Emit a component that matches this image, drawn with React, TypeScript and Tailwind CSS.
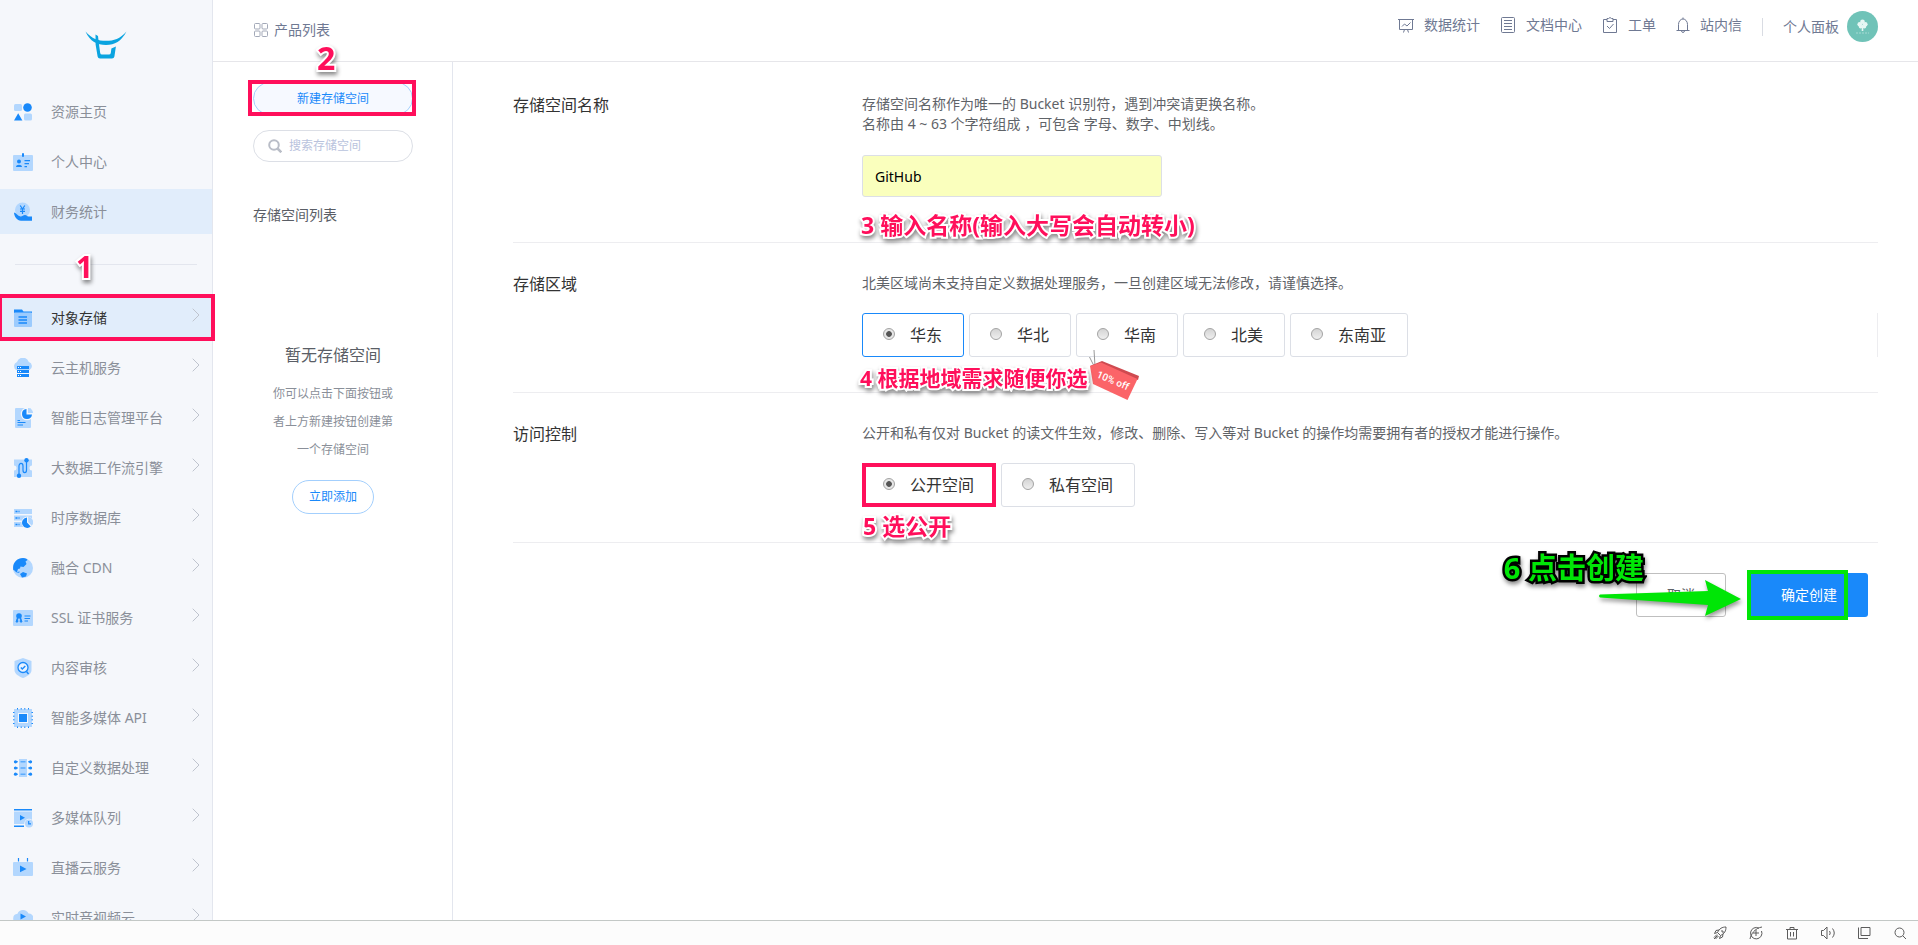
import type { ReactNode } from "react";

const LIGHT = "#b3d7fe";
const BLUE = "#1989fa";

const navIcons: Record<string, ReactNode> = {
  home: (
    <>
      <rect x="1" y="2" width="8" height="7" rx="1.5" fill={LIGHT} />
      <circle cx="14.5" cy="5.5" r="4.3" fill={BLUE} />
      <path d="M5.2 11.2 9.4 18.6H1z" fill={BLUE} />
      <rect x="11" y="11.5" width="8" height="7" rx="1.5" fill={LIGHT} />
    </>
  ),
  user: (
    <>
      <rect x="0" y="3" width="20" height="16" rx="1" fill={LIGHT} />
      <rect x="9" y="1" width="2" height="4" rx="1" fill={BLUE} />
      <circle cx="6" cy="9.5" r="2" fill={BLUE} />
      <path d="M3 15c0-3 6-3 6 0zM11.5 8h5.500v1.300h-5.500zM11.500 11h4.500v1.300h-4.500zM11.500 14h2.500v1.300h-2.500z" fill={BLUE} />
    </>
  ),
  finance: (
    <>
      <circle cx="9.500" cy="8" r="7.500" fill={LIGHT} />
      <path d="M7.200 3.500 9.500 7l2.300-3.500M7 7h5M7 9.300h5M9.500 7v5" stroke={BLUE} strokeWidth="1.200" fill="none" />
      <path d="M1 10.500c2.500.5 3.500 3.500 6.500 4 2 .2 2.500-1.500 4.500-1.500s2 2 4 1.500h3V18.700H8C4 18.700 1 14 1 10.500z" fill={BLUE} />
    </>
  ),
  storage: (
    <>
      <path d="M1 1.500h8l1.500 2H19V5H1z" fill={BLUE} />
      <rect x="1" y="4.500" width="18" height="14.500" rx="1" fill="#9ccbfd" />
      <path d="M5.500 9h8.500M5.500 12h8.500M5.500 15h8.500" stroke={BLUE} strokeWidth="1.300" />
    </>
  ),
  cloudHost: (
    <>
      <path d="M3.500 12a4.300 4.300 0 0 1 .5-8A6.200 6.200 0 0 1 15.800 4 4.300 4.300 0 0 1 16.500 12z" fill={LIGHT} />
      <path d="M4 8h12v3H4zM4 12h12v3H4zM4 16h12v3H4z" fill={BLUE} />
      <path d="M5 9.500h1M7 9.500h1M5 13.500h1M7 13.500h1M5 17.500h1M7 17.500h1" stroke="#fff" strokeWidth="1" />
    </>
  ),
  log: (
    <>
      <rect x="2" y="0" width="16" height="20" rx="1" fill={LIGHT} />
      <circle cx="14" cy="6" r="6.300" fill="#f5f7fb" />
      <path d="M13.500 1a5 5 0 1 0 5.500 5.500h-5.500z" fill={BLUE} />
      <path d="M15 0a5 5 0 0 1 5 5h-5z" fill={LIGHT} />
      <path d="M4.500 12.500H7M4.500 14.500h8M4.500 17h5.500" stroke={BLUE} strokeWidth="1" />
    </>
  ),
  workflow: (
    <>
      <path d="M1 1.500h18v6a2.500 2.500 0 0 0 0 5v6.500H1v-6.500a2.500 2.500 0 0 0 0-5z" fill={LIGHT} />
      <path d="M6 17V8c0-3.500 4-3.500 4 0v4c0 3.500 3.500 3.500 3.500 0V2.500" stroke={BLUE} strokeWidth="1.200" fill="none" />
      <circle cx="6" cy="17.800" r="2.200" fill={BLUE} />
      <circle cx="13.500" cy="2.200" r="2.200" fill={BLUE} />
    </>
  ),
  timeDb: (
    <>
      <path d="M1 1h18v5H1zM1 7.500h18v5H1zM1 14h18v5H1z" fill={LIGHT} />
      <path d="M2.500 3.500h2M5.500 3.500h1M2.500 10h2M5.500 10h1M2.500 16.500h2M5.500 16.500h1" stroke={BLUE} strokeWidth="1.500" />
      <circle cx="14.500" cy="14.500" r="6" fill="#f5f7fb" />
      <path d="M14 9.500a5.200 5.200 0 1 0 3.800 9L14 14.500z" fill={BLUE} />
      <path d="M15.200 9a5.200 5.200 0 0 1 3.500 8.800L15.200 14z" fill={LIGHT} />
    </>
  ),
  cdn: (
    <>
      <circle cx="10" cy="10" r="10" fill={LIGHT} />
      <path d="M.300 12C-1 5 4 0 10 0c3 0 4 1 4.500 2l-2 1.500 1 2.500-3 3-3-.5-.5 2-2 .5-1 3 2.500-.5c1 1.500-3 2-5-1zM7 16l3-2 4 1.500-1 3-4 1z" fill={BLUE} />
    </>
  ),
  ssl: (
    <>
      <rect x="0" y="2" width="20" height="16" rx="1" fill={LIGHT} />
      <circle cx="6" cy="8" r="2.800" fill={BLUE} />
      <path d="m4.500 9.500-1.500 4.500h1.800zM7.500 9.500 9 14H7.200z" fill={BLUE} stroke={BLUE} />
      <path d="M11.500 8h6M11.500 10.500h5.500M11.500 13h3.500" stroke={BLUE} />
    </>
  ),
  audit: (
    <>
      <path d="M10 0l8.500 3v9c0 4-4.500 6.500-8.500 8-4-1.500-8.500-4-8.500-8V3z" fill={LIGHT} />
      <circle cx="10" cy="9.500" r="5" fill="#e8f2ff" stroke={BLUE} strokeWidth="1.300" />
      <path d="m7.800 9.500 1.500 1.500 3-3M13.500 13.500l2 2.500" stroke={BLUE} strokeWidth="1.400" fill="none" />
    </>
  ),
  api: (
    <>
      <rect x="3" y="3" width="14" height="14" fill="none" stroke={LIGHT} strokeWidth="4" />
      <rect x="6" y="6" width="8" height="8" fill={BLUE} />
      <path d="M4.500 0v1.500M8.200 0v1.500M11.800 0v1.500M15.500 0v1.500M4.500 18.500V20M8.200 18.500V20M11.800 18.500V20M15.500 18.500V20M0 4.500h1.500M0 8.200h1.500M0 11.800h1.500M0 15.500h1.500M18.500 4.500H20M18.500 8.200H20M18.500 11.800H20M18.500 15.500H20" stroke={BLUE} strokeWidth="1" />
    </>
  ),
  custom: (
    <>
      <path d="M6 1h8v18H6z" fill={LIGHT} />
      <path d="M7.500 3.800h5M7.500 10h5M7.500 16.200h5" stroke="#5cabfc" strokeWidth="1.500" />
      <path d="M1 3.800h4M1 10h4M1 16.200h4M15 3.800h4M15 10h4M15 16.200h4" stroke={BLUE} strokeWidth="1" />
      <g fill={BLUE}>
        <circle cx="2.500" cy="3.800" r="1.600" />
        <circle cx="2.500" cy="10" r="1.600" />
        <circle cx="2.500" cy="16.200" r="1.600" />
        <circle cx="17.500" cy="3.800" r="1.600" />
        <circle cx="17.500" cy="10" r="1.600" />
        <circle cx="17.500" cy="16.200" r="1.600" />
      </g>
    </>
  ),
  queue: (
    <>
      <path d="M1 3.500h18V16H1z" fill={LIGHT} />
      <path d="M1 1h18v1.500H1zM1 17.500h10V19H1zM7 7l5 2.800L7 12.500z" fill={BLUE} />
      <circle cx="16" cy="15.500" r="4.700" fill="#f5f7fb" />
      <circle cx="16" cy="15.500" r="4" fill={LIGHT} />
      <path d="M15.700 13v2.800H18" stroke={BLUE} strokeWidth="1.200" fill="none" />
    </>
  ),
  live: (
    <>
      <rect x="0" y="4" width="20" height="14" rx="1" fill={LIGHT} />
      <path d="M5.500 0v3.500M14.500 0v3.500" stroke={BLUE} strokeWidth="1.200" />
      <path d="M7 7.500 13.500 11 7 14.300z" fill={BLUE} />
    </>
  ),
  rtc: (
    <>
      <path d="M4 15a4.700 4.700 0 0 1 .5-9.300A6 6 0 0 1 15.500 5.500 4.700 4.700 0 0 1 16 15z" fill={LIGHT} />
      <path d="M7.500 5.500 13 8.500 7.500 11.500z" fill={BLUE} />
    </>
  ),
};

const topNav = [
  { icon: "home", label: "资源主页" },
  { icon: "user", label: "个人中心" },
  { icon: "finance", label: "财务统计", hover: true },
];

const productNav = [
  { icon: "storage", label: "对象存储", current: true },
  { icon: "cloudHost", label: "云主机服务" },
  { icon: "log", label: "智能日志管理平台" },
  { icon: "workflow", label: "大数据工作流引擎" },
  { icon: "timeDb", label: "时序数据库" },
  { icon: "cdn", label: "融合 CDN" },
  { icon: "ssl", label: "SSL 证书服务" },
  { icon: "audit", label: "内容审核" },
  { icon: "api", label: "智能多媒体 API" },
  { icon: "custom", label: "自定义数据处理" },
  { icon: "queue", label: "多媒体队列" },
  { icon: "live", label: "直播云服务" },
  { icon: "rtc", label: "实时音视频云" },
];

function NavLink({ icon, label, active, current, arrow }: { icon: string; label: string; active?: boolean; current?: boolean; arrow?: boolean }) {
  return (
    <a
      href="#"
      className={`relative flex h-[45px] items-center gap-[18px] pr-3 pl-[13px] text-sm ${active ? "bg-[#e1edfb]" : ""} ${current ? "text-[#333]" : "text-[#8a8f99]"}`}
    >
      <svg viewBox="0 0 20 20" className="size-5 shrink-0">
        {navIcons[icon]}
      </svg>
      <span className="grow whitespace-nowrap">{label}</span>
      {arrow && (
        <svg viewBox="0 0 8 14" className="mb-1.5 h-[14px] w-2 shrink-0" fill="none" stroke="#bfc4ce">
          <path d="M.7.7 7 7 .7 13.300" />
        </svg>
      )}
      {current && <span className="absolute -inset-y-px -right-[3px] left-0 border-4 border-l-2 border-[#ff0f5b]" />}
    </a>
  );
}

function Sidebar() {
  return (
    <nav className="flex w-[213px] shrink-0 flex-col border-r border-[#e3e6ee] bg-[#f5f7fb]">
      <a href="#" aria-label="首页" className="flex h-[89px] shrink-0 items-center justify-center">
        <svg viewBox="0 0 42 28" className="h-7 w-[42px]" fill="#0ba4e0">
          <path d="M.5.500C7 8 13 9.800 21 9.800S35 8 41.500.500C36 10.500 30 14 21 14S5 10.500.500.500z" />
          <path d="M10.500 3.500l2.500 1.500.8 7 1.400 10q.2 1.500 1.800 1.500h7q1.500 0 1.800-1.500l.6-4.500 4.500-2-1.500 10q-.4 2-2.400 2H15q-2 0-2.400-2l-2-12z" />
        </svg>
      </a>
      <div className="flex flex-col gap-[5px]">
        {topNav.map((n) => (
          <NavLink key={n.icon} icon={n.icon} label={n.label} active={n.hover} />
        ))}
      </div>
      <div className="relative mx-[15px] my-[30px] h-px shrink-0 bg-[#e3e6ee]">
        <Note className="-top-3 left-[61px] text-[30px]">1</Note>
      </div>
      <div className="flex flex-col gap-[5px]">
        {productNav.map((n) => (
          <NavLink key={n.icon} icon={n.icon} label={n.label} active={n.current} current={n.current} arrow />
        ))}
      </div>
    </nav>
  );
}

function Note({ className, children }: { className: string; children: ReactNode }) {
  return (
    <span
      className={`pointer-events-none absolute z-10 leading-none font-bold whitespace-nowrap text-[#ff0f5b] drop-shadow-[1px_3px_2px_rgba(0,0,0,0.45)] [-webkit-text-stroke:4px_#fff] [paint-order:stroke_fill] ${className}`}
    >
      {children}
    </span>
  );
}

const headerLinks = [
  {
    label: "数据统计",
    size: "w-4",
    box: "0 0 16 16",
    path: "M0 2.500h16M1.500 2.500v10h13v-10M4 9.500l2.500-2.500 2.500 2 3.500-3.500M6.500 12.500l-1 3M9.500 12.500l1 3",
  },
  {
    label: "文档中心",
    size: "w-4",
    box: "0 0 16 16",
    path: "M2.500.5h11q1 0 1 1v13q0 1-1 1h-11q-1 0-1-1v-13q0-1 1-1zM4 3.500h8M4 6.500h8M4 9.500h8M4 12.500h8",
  },
  {
    label: "工单",
    size: "w-4",
    box: "0 0 16 16",
    path: "M5 2.500H1.500v13h13v-13H11M5 4.500v-3h1.500q1.500-2 3 0H11v3zM5 9l2.500 2.500L11.500 7",
  },
  {
    label: "站内信",
    size: "w-[14px]",
    box: "1 0 14 16",
    path: "M1.500 13.500h13M3.500 13.500v-6a4.500 5.500 0 0 1 9 0v6M8 2V.5M6.500 13.500q0 2 1.500 2t1.500-2",
  },
];

function Header() {
  return (
    <header className="flex h-[62px] shrink-0 justify-between border-b border-[#e6e6ea] pr-10 pl-[41px] text-sm text-[#6f7993]">
      <div className="relative flex h-[60px] items-center gap-[6px]">
        <svg viewBox="0 0 14 14" className="size-[14px]" fill="none" stroke="#a3a9b8">
          <rect x=".5" y=".5" width="5.500" height="5.500" rx="1" />
          <rect x="8" y=".5" width="5.500" height="5.500" rx="1" />
          <rect x=".5" y="8" width="5.500" height="5.500" rx="1" />
          <rect x="8" y="8" width="5.500" height="5.500" rx="1" />
        </svg>
        <h1>产品列表</h1>
        <Note className="top-[42px] left-[63px] text-[32px]">2</Note>
      </div>
      <div className="flex h-[53px] items-center">
        <nav className="mb-[3px] flex gap-5">
          {headerLinks.map((l) => (
            <a key={l.label} href="#" className="flex items-center gap-[10px]">
              <svg viewBox={l.box} className={`h-4 ${l.size}`} fill="none" stroke="currentColor">
                <path d={l.path} />
              </svg>
              {l.label}
            </a>
          ))}
        </nav>
        <span className="mx-5 h-[18px] w-px bg-[#d9dce3]" />
        <a href="#" className="flex items-center gap-2">
          个人面板
          <svg viewBox="0 0 31 31" className="size-[31px]">
            <circle cx="15.500" cy="15.500" r="15.500" fill="#70c3b8" />
            <g fill="#e6f7f4">
              <circle cx="15.500" cy="10.800" r="2.300" />
              <circle cx="12.800" cy="13.300" r="2.400" />
              <circle cx="18.200" cy="13.300" r="2.400" />
              <circle cx="13.600" cy="15.800" r="1.800" />
              <circle cx="17.400" cy="15.800" r="1.800" />
              <path d="M14.700 14h1.600v6h-1.600z" />
            </g>
            <path d="M9 22h13" stroke="#a5dad3" strokeDasharray="2 1" />
          </svg>
        </a>
      </div>
    </header>
  );
}

function BucketPanel() {
  return (
    <aside className="flex w-[240px] shrink-0 flex-col items-center border-r border-[#e3e6ee] pt-5 pr-[39px] pl-10">
      <div className="relative w-full">
        <button className="block h-[33px] w-full rounded-full border border-[#a3cffd] bg-[#f6f9ff] text-xs text-[#1989fa]">新建存储空间</button>
        <span className="absolute -top-[2px] -right-[3px] -bottom-px -left-[5px] border-4 border-[#ff0f5b]" />
      </div>
      <label className="mt-[15px] flex h-8 w-full items-center gap-[7px] rounded-full border border-[#dcdfe6] px-[14px]">
        <svg viewBox="0 0 14 14" className="size-[14px] shrink-0" fill="none" stroke="#b9bdc7">
          <circle cx="6" cy="6" r="4.800" strokeWidth="2" />
          <path d="m9.500 9.500 3.800 3.800" strokeWidth="2.500" />
        </svg>
        <input aria-label="搜索存储空间" placeholder="搜索存储空间" className="w-full min-w-0 bg-transparent text-xs outline-none placeholder:text-[#b9c3dd]" />
      </label>
      <h2 className="mt-[43px] w-full text-sm text-[#5a5e66]">存储空间列表</h2>
      <p className="mt-[118px] text-base text-[#5a5e66]">暂无存储空间</p>
      <p className="mt-[13px] w-[120px] text-center text-xs leading-7 text-[#8a8f99]">你可以点击下面按钮或者上方新建按钮创建第一个存储空间</p>
      <button className="mt-4 h-[34px] w-[82px] rounded-full border border-[#a3cffd] text-xs text-[#1989fa]">立即添加</button>
    </aside>
  );
}

function Section({ title, desc, children }: { title: string; desc: ReactNode; children: ReactNode }) {
  return (
    <section className="flex border-b border-[#ededf0] pt-[30px] pb-[35px]">
      <h3 className="w-[349px] shrink-0 text-base/[22px] text-[#333]">{title}</h3>
      <div className="relative grow">
        <p className="text-sm leading-5 text-[#5f6368]">{desc}</p>
        {children}
      </div>
    </section>
  );
}

function Options({ name, items, accent }: { name: string; items: string[]; accent?: boolean }) {
  return (
    <div className="mt-5 flex gap-[5px]">
      {items.map((label, i) => (
        <label
          key={label}
          className={`relative flex h-11 items-center rounded-[3px] border pr-[21px] pl-5 text-base text-[#333] ${accent && i === 0 ? "border-[#1989fa]" : "border-[#dcdfe6]"}`}
        >
          <input
            type="radio"
            name={name}
            defaultChecked={i === 0}
            className="mr-[15px] mb-[2px] size-3 appearance-none rounded-full border border-[#a3a3a3] bg-linear-to-b from-[#d4d4d4] to-[#efefef] checked:bg-radial checked:from-[#555] checked:from-35% checked:to-[#e6e6e6] checked:to-45%"
          />
          {label}
          {!accent && i === 0 && <span className="absolute -inset-px border-4 border-[#ff0f5b]" />}
        </label>
      ))}
    </div>
  );
}

function CreateForm() {
  return (
    <main className="grow pt-[2px] pr-10 pl-[60px]">
      <Section
        title="存储空间名称"
        desc={
          <>
            存储空间名称作为唯一的 Bucket 识别符，遇到冲突请更换名称。
            <br />
            名称由 4 ~ 63 个字符组成 ，可包含 字母、数字、中划线。
          </>
        }
      >
        <input
          aria-label="存储空间名称"
          defaultValue="GitHub"
          className="mt-[21px] mb-[10px] block h-[42px] w-[300px] rounded-[3px] border border-[#dcdfe6] bg-[#faffbd] px-3 text-sm text-black outline-none"
        />
        <Note className="top-[120px] -left-px text-[23px]">3 输入名称(输入大写会自动转小)</Note>
      </Section>
      <Section title="存储区域" desc="北美区域尚未支持自定义数据处理服务，一旦创建区域无法修改，请谨慎选择。">
        <div className="border-r border-[#ededf0]">
          <Options name="region" items={["华东", "华北", "华南", "北美", "东南亚"]} accent />
        </div>
        <svg viewBox="0 0 50 50" className="absolute top-[77px] left-[227px] size-[50px]">
          <path d="M5 16 .5 7M6 16 5 0" stroke="#999" fill="none" />
          <path d="M1 16 13 11 50 26 49 30z" fill="#cf4a50" />
          <path d="M1 16 12 12.500 48.500 29 38.500 50 4 34z" fill="#fb6468" />
          <text x="7" y="27" fill="#fff" fontSize="10" fontWeight="500" fontFamily="Roboto, sans-serif" transform="rotate(23 7 27)">
            10% off
          </text>
        </svg>
        <Note className="top-[95px] -left-[2px] text-[21px]">4 根据地域需求随便你选</Note>
      </Section>
      <Section title="访问控制" desc="公开和私有仅对 Bucket 的读文件生效，修改、删除、写入等对 Bucket 的操作均需要拥有者的授权才能进行操作。">
        <Options name="access" items={["公开空间", "私有空间"]} />
        <Note className="top-[92px] left-px text-[23px]">5 选公开</Note>
      </Section>
      <div className="relative flex justify-end gap-6 pt-[30px] pr-[10px]">
        <button className="h-11 w-[90px] rounded-[3px] border border-[#bfbfbf] text-sm text-[#5f6368]">取消</button>
        <div className="relative">
          <button className="block h-11 w-[118px] rounded-[3px] bg-[#1989fa] text-sm text-white">确定创建</button>
          <span className="absolute -inset-y-[3px] right-5 -left-[3px] border-4 border-[#00e606]" />
        </div>
        <span className="pointer-events-none absolute top-[10px] right-[234px] z-10 text-[29px] leading-none font-bold whitespace-nowrap text-[#00e606] drop-shadow-[1px_3px_2px_rgba(0,0,0,0.45)] [-webkit-text-stroke:5px_#000] [paint-order:stroke_fill]">
          6 点击创建
        </span>
        <svg viewBox="0 0 142 37" className="absolute top-[37px] right-[137px] h-[37px] w-[142px] drop-shadow-[1px_3px_2px_rgba(0,0,0,0.4)]" fill="#00e606">
          <path d="M1 14.500 109 11 106 0 142 19 106 36 109 25 1 17.500Q-1 16 1 14.500z" />
        </svg>
      </div>
    </main>
  );
}

const statusIcons = [
  {
    name: "加速",
    path: "M13 1C9 1 6.500 2.500 4.500 6.500L7.500 9.500C11.500 7.500 13 5 13 1zM6 4 3 4.500 1.500 7.500 4.500 6.500M10 8 9.500 11 6.500 12.500 7.500 9.500M4 8.500 1 11.500M5.500 10 2.500 13M4.500 9.500 1 13M8 5h2v2",
  },
  { name: "广告过滤", path: "M10 2.200A5.700 5.700 0 1 0 12.500 5M1 13C2 8 6 2 13 1M7 4v6M4 7h6" },
  { name: "清理", path: "M1 3.500h12M5 3.500v-2h4v2M2.500 3.500v9.500h9V3.500M5.500 6v4.500M8.500 6v4.500" },
  { name: "声音", path: "M.5 4.500h2L6 1v12L2.500 9.500h-2zM8.500 5q1.500 2 0 4M11.500 2.500q3.500 4.500 0 9" },
  { name: "窗口", path: "M4 1.500h9v8H4zM1.500 1.500v11H11" },
  { name: "查找", path: "M6.500 2a4.500 4.500 0 1 0 0 9 4.500 4.500 0 1 0 0-9M9.800 9.800 13 13" },
];

function StatusBar() {
  return (
    <footer className="flex h-[25px] shrink-0 items-center justify-end gap-[22px] border-t border-[#c3c8c6] bg-[#fcfcfc] pr-[11px] text-[#5c5c5c]">
      {statusIcons.map((s) => (
        <button key={s.name} aria-label={s.name}>
          <svg viewBox="0 0 14 14" className="size-[14px]" fill="none" stroke="currentColor">
            <path d={s.path} />
          </svg>
        </button>
      ))}
    </footer>
  );
}

export default function App() {
  return (
    <div className="flex h-screen flex-col overflow-hidden bg-white font-['Noto_Sans','Noto_Sans_CJK_SC',sans-serif]">
      <div className="flex min-h-0 grow overflow-hidden">
        <Sidebar />
        <div className="flex min-w-0 grow flex-col">
          <Header />
          <div className="flex min-h-0 grow">
            <BucketPanel />
            <CreateForm />
          </div>
        </div>
      </div>
      <StatusBar />
    </div>
  );
}
